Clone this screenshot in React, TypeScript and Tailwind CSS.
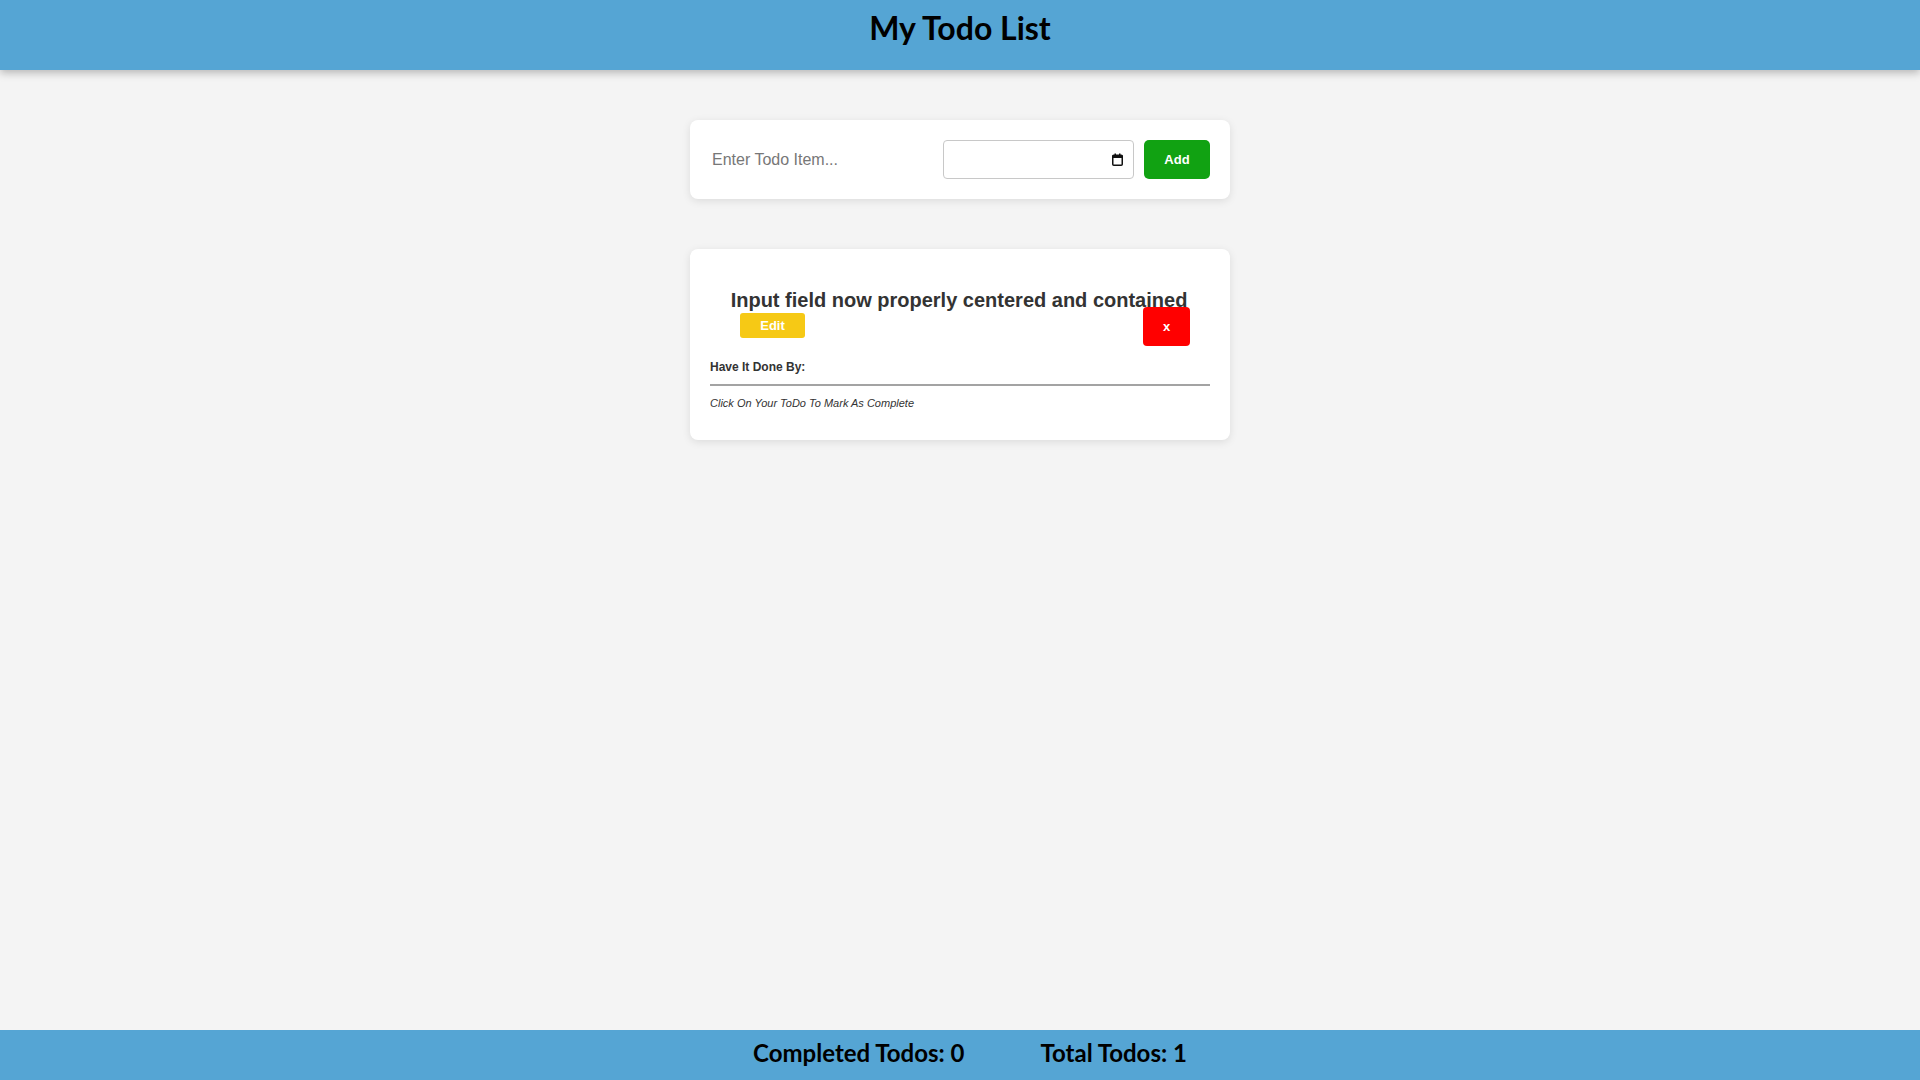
import React from 'react';

const todos = [{ title: 'Input field now properly centered and contained', done: false }];

const CalendarIcon = () => (
  <svg width="11" height="13" viewBox="0 0 11 13" fill="none">
    <rect x="0.75" y="2.25" width="9.5" height="10" rx="1" stroke="#111" strokeWidth="1.5" />
    <rect x="0.5" y="2" width="10" height="3" fill="#111" />
    <rect x="2.5" y="0.5" width="1.5" height="2" fill="#111" />
    <rect x="7" y="0.5" width="1.5" height="2" fill="#111" />
  </svg>
);

const App = () => {
  const completed = todos.filter((t) => t.done).length;

  return (
    <div className="min-h-screen flex flex-col bg-[#f4f4f4] font-['Liberation_Sans',Arial,sans-serif]">
      <header className="h-[70px] bg-[#55a5d4] shadow-[0_3px_8px_rgba(0,0,0,0.25)] pt-[9px] relative z-10">
        <h1 className="text-center text-[32px] leading-[38px] font-bold text-black font-['Lato',sans-serif]">
          My Todo List
        </h1>
      </header>

      <main className="flex-1 flex flex-col items-center pt-[50px] gap-[50px]">
        <div className="w-[540px] bg-white rounded-lg shadow-[0_2px_8px_rgba(0,0,0,0.1)] p-5 flex items-center">
          <input
            type="text"
            placeholder="Enter Todo Item..."
            className="flex-1 min-w-0 pl-[2px] text-[16px] text-[#333] placeholder:text-[#777] outline-none bg-transparent"
          />
          <div className="ml-[8px] w-[191px] h-[39px] border border-[#c8c8c8] rounded-[4px] flex items-center justify-end pr-[10px]">
            <CalendarIcon />
          </div>
          <button className="ml-[10px] w-[66px] h-[39px] bg-[#11a212] rounded-[5px] text-white font-bold text-[13px]">
            Add
          </button>
        </div>

        {todos.map((todo) => (
          <div
            key={todo.title}
            className="w-[540px] bg-white rounded-lg shadow-[0_2px_8px_rgba(0,0,0,0.1)] p-5 pb-[30px]"
          >
            <h3 className="mt-[21px] pr-[2px] text-center text-[20px] leading-[20px] font-bold text-[#333]">
              {todo.title}
            </h3>
            <div className="mt-[-3px] h-[39px] flex items-center justify-between">
              <button className="ml-[30px] w-[65px] h-[25px] mt-[-2px] bg-[#f6c915] rounded-[3px] text-white font-bold text-[13px]">
                Edit
              </button>
              <button className="mr-[20px] w-[47px] h-[39px] bg-[#ff0000] rounded-[4px] text-white font-bold text-[13px]">
                x
              </button>
            </div>
            <p className="mt-[14px] text-[12px] leading-[14px] font-bold text-[#333]">Have It Done By:</p>
            <div className="mt-[10px] h-[2px] bg-[#a3a3a3]" />
            <p className="mt-[11px] text-[11px] leading-[13px] italic text-[#333]">
              Click On Your ToDo To Mark As Complete
            </p>
          </div>
        ))}
      </main>

      <footer className="h-[50px] bg-[#55a5d4] flex items-center justify-center gap-[76px] pl-[20px] pb-[4px] font-['Lato',sans-serif] font-bold text-[24px] text-black">
        <span>Completed Todos: {completed}</span>
        <span>Total Todos: {todos.length}</span>
      </footer>
    </div>
  );
};

export default App;
